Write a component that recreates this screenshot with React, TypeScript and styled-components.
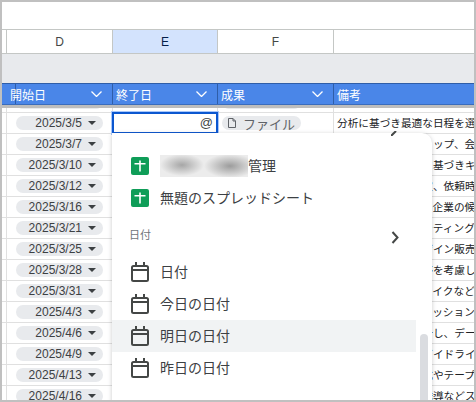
import React from 'react';
import styled, { createGlobalStyle } from 'styled-components';

const dates = [
  '2025/3/5', '2025/3/7', '2025/3/10', '2025/3/12', '2025/3/16', '2025/3/21', '2025/3/25',
  '2025/3/28', '2025/3/31', '2025/4/3', '2025/4/6', '2025/4/9', '2025/4/13', '2025/4/16',
];

const notes = [
  '分析に基づき最適な日程を選定',
  '各部署のワークショップ、会議',
  '過去の実績データに基づきキャスト',
  '担当者を早期に確定、依頼時の',
  '依頼先として複数の企業の候補',
  '関係者との初回ミーティング',
  '特設サイト用のデザイン販売ページ',
  '在庫と配送の遅延等を考慮して',
  '撮影の衣装やヘアメイクなど',
  '関係者向けディスカッション',
  '各施策の結果を集計し、データ',
  'ブランド利用時のガイドライン',
  '会場設営の資材一式やテープ',
  '当日の来場者への誘導などスタッフ',
];

const COLS = '5px 106px 105px 116px 1fr';

const Global = createGlobalStyle`
  html, body { margin: 0; padding: 0; background: #fff; }
  * { box-sizing: border-box; }
`;

const Frame = styled.div`
  position: relative;
  width: 476px;
  height: 402px;
  border: 2px solid #c0c0c0;
  overflow: hidden;
  background: #fff;
  font-family: 'Liberation Sans', 'Noto Sans CJK JP', sans-serif;
  color: #3c4043;
`;

const TopBlank = styled.div`
  height: 28px;
  border-bottom: 1px solid #c4c7c5;
`;

const LetterRow = styled.div`
  display: grid;
  grid-template-columns: ${COLS};
  height: 24px;
  border-bottom: 1px solid #c4c7c5;
`;

const Letter = styled.div<{ $active?: boolean }>`
  display: flex;
  align-items: center;
  justify-content: center;
  font-size: 12px;
  color: ${(p) => (p.$active ? '#041e49' : '#444746')};
  background: ${(p) => (p.$active ? '#d3e3fd' : '#fff')};
  border-right: 1px solid #c4c7c5;
  &:last-child { border-right: 0; }
`;

const Band = styled.div`
  height: 29px;
  background: #e8eaed;
`;

const HeadRow = styled.div`
  display: grid;
  grid-template-columns: ${COLS};
  height: 22px;
  background: #4a86e8;
  border-top: 1px solid #2f5ea8;
  border-bottom: 1px solid #3a6cbc;
`;

const HeadCell = styled.div`
  display: flex;
  align-items: center;
  justify-content: space-between;
  padding: 0 10px 0 3px;
  color: #fff;
  font-size: 12px;
  border-right: 1px solid #2f5ea8;
  &:last-child { border-right: 0; }
`;

const FreezeLine = styled.div`
  height: 3px;
  background: #bdbdbd;
`;

const Row = styled.div<{ $partial?: boolean }>`
  display: grid;
  grid-template-columns: ${COLS};
  height: ${(p) => (p.$partial ? '5px' : '21px')};
  border-bottom: 1px solid #e0e0e0;
`;

const Cell = styled.div<{ $partial?: boolean }>`
  position: relative;
  display: flex;
  align-items: ${(p) => (p.$partial ? 'flex-end' : 'flex-start')};
  min-width: 0;
  padding: ${(p) => (p.$partial ? '0 0 3px 0' : '3px 0 0 0')};
  border-right: 1px solid #e0e0e0;
  overflow: ${(p) => (p.$partial ? 'hidden' : 'visible')};
  &:last-child { border-right: 0; }
`;

const DateChip = styled.div`
  flex: none;
  display: flex;
  align-items: center;
  justify-content: flex-end;
  width: 87px;
  height: 14px;
  margin-left: 9px;
  padding-right: 7px;
  gap: 6px;
  border-radius: 7px;
  background: #e8eaed;
  font-size: 12px;
  color: #3c4043;
`;

const Caret = styled.span`
  width: 0;
  height: 0;
  border-left: 4px solid transparent;
  border-right: 4px solid transparent;
  border-top: 4px solid #3c4043;
`;

const FileChip = styled.div<{ $blank?: boolean }>`
  flex: none;
  display: flex;
  align-items: center;
  gap: 7px;
  width: ${(p) => (p.$blank ? '79px' : 'auto')};
  height: 14px;
  margin-left: 4px;
  padding: 0 6px 0 6px;
  border-radius: 7px;
  background: #e8eaed;
  font-size: 13px;
  color: #5f6368;
`;

const Note = styled.div`
  padding: 0 0 0 3px;
  margin-top: -1px;
  font-size: 10.67px;
  line-height: 16px;
  white-space: nowrap;
  overflow: hidden;
  color: #202124;
`;

const Editor = styled.div`
  position: absolute;
  top: -1px;
  left: -1px;
  width: 106px;
  height: 22px;
  display: flex;
  align-items: center;
  justify-content: flex-end;
  padding: 0 3px 2px 0;
  background: #fff;
  border: 2px solid #0b57d0;
  outline: 1px solid #a8c7fa;
  font-size: 13px;
  color: #444746;
  z-index: 1;
`;

const Menu = styled.div`
  position: absolute;
  left: 110px;
  top: 131px;
  width: 320px;
  height: 290px;
  padding-top: 17px;
  background: #fff;
  border-radius: 0 10px 0 0;
  box-shadow: 0 1px 4px rgba(60, 64, 67, 0.28);
  z-index: 2;
`;

const Item = styled.div<{ $hover?: boolean }>`
  display: flex;
  align-items: center;
  gap: 11px;
  width: 304px;
  height: 32px;
  padding-left: 19px;
  font-size: 14px;
  color: #3c4043;
  background: ${(p) => (p.$hover ? '#f1f3f4' : 'transparent')};
`;

const ItemLabel = styled.span`
  display: flex;
  align-items: center;
  margin-top: -2px;
`;

const Redacted = styled.span`
  width: 88px;
  height: 22px;
  margin-top: 2px;
  background:
    radial-gradient(ellipse 22px 11px at 22px 10px, #a6a6a6, transparent),
    radial-gradient(ellipse 26px 12px at 70px 11px, #9c9c9c, transparent),
    #ececec;
`;

const Section = styled.div<{ $last?: boolean }>`
  display: flex;
  align-items: flex-start;
  justify-content: space-between;
  width: 304px;
  height: 42px;
  padding: ${(p) => (p.$last ? '16px' : '15px')} 17px 0 17px;
  font-size: 11px;
  line-height: 13px;
  color: #70757a;
`;

const Arrow = styled.svg`
  margin-top: 2px;
`;

const ScrollThumb = styled.div`
  position: absolute;
  left: 308px;
  top: 201px;
  width: 8px;
  height: 100px;
  border-radius: 4px 4px 0 0;
  background: #dadce0;
`;

const Tick = styled.svg`
  position: absolute;
  left: 279px;
  top: -2px;
`;

const SheetIcon = () => (
  <svg width="18" height="18" viewBox="0 0 18 18">
    <rect width="18" height="18" rx="2" fill="#0f9d58" />
    <path d="M3.500 6h11v1.600h-11zM8.200 3.500h1.600v11H8.200z" fill="#fff" />
  </svg>
);

const CalendarIcon = () => (
  <svg width="18" height="20" viewBox="0 0 18 20" fill="none" stroke="#444746" strokeWidth="2">
    <rect x="1" y="4" width="16" height="15" rx="1.500" />
    <path d="M1 8h16M5 0v4M13 0v4" />
  </svg>
);

const Chevron = () => (
  <svg width="11" height="6" viewBox="0 0 11 6" fill="none" stroke="#fff" strokeWidth="1.300">
    <path d="M.5.5l5 5 5-5" />
  </svg>
);

const FileIcon = () => (
  <svg width="8" height="10" viewBox="0 0 8 10" fill="none" stroke="#5f6368" strokeWidth="1">
    <path d="M.5.5h4.500l2.500 2.500v6.500h-7zM5 .5v2.500h2.500" />
  </svg>
);

export default function App() {
  return (
    <>
      <Global />
      <Frame>
        <TopBlank />
        <LetterRow>
          <Letter />
          <Letter>D</Letter>
          <Letter $active>E</Letter>
          <Letter>F</Letter>
          <Letter />
        </LetterRow>
        <Band />
        <HeadRow>
          <HeadCell />
          <HeadCell>開始日<Chevron /></HeadCell>
          <HeadCell>終了日<Chevron /></HeadCell>
          <HeadCell>成果<Chevron /></HeadCell>
          <HeadCell>備考</HeadCell>
        </HeadRow>
        <FreezeLine />
        <Row $partial>
          <Cell $partial />
          <Cell $partial><DateChip /></Cell>
          <Cell $partial />
          <Cell $partial><FileChip $blank /></Cell>
          <Cell $partial />
        </Row>
        {dates.map((date, i) => (
          <Row key={date}>
            <Cell />
            <Cell>
              <DateChip>{date}<Caret /></DateChip>
            </Cell>
            <Cell>{i === 0 && <Editor>@</Editor>}</Cell>
            <Cell>
              {i === 0 && <FileChip><FileIcon />ファイル</FileChip>}
            </Cell>
            <Cell><Note>{notes[i]}</Note></Cell>
          </Row>
        ))}
        <Menu>
          <Tick width="6" height="5" viewBox="0 0 6 5">
            <path d="M0 5L5 0" stroke="#444746" strokeWidth="2" />
          </Tick>
          <Item>
            <SheetIcon />
            <ItemLabel><Redacted />管理</ItemLabel>
          </Item>
          <Item>
            <SheetIcon />
            <ItemLabel>無題のスプレッドシート</ItemLabel>
          </Item>
          <Section>
            日付
            <Arrow width="8" height="13" viewBox="0 0 8 13" fill="none" stroke="#444746" strokeWidth="2">
              <path d="M1.500 1l5 5.500-5 5.500" />
            </Arrow>
          </Section>
          <Item><CalendarIcon /><ItemLabel>日付</ItemLabel></Item>
          <Item><CalendarIcon /><ItemLabel>今日の日付</ItemLabel></Item>
          <Item $hover><CalendarIcon /><ItemLabel>明日の日付</ItemLabel></Item>
          <Item><CalendarIcon /><ItemLabel>昨日の日付</ItemLabel></Item>
          <Section $last>ドロップダウン</Section>
          <ScrollThumb />
        </Menu>
      </Frame>
    </>
  );
}
